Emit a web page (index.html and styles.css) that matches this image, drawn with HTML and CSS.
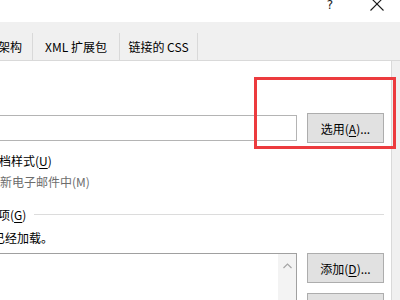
FILE: index.html
```html
<!DOCTYPE html>
<html lang="zh-CN">
<head>
<meta charset="utf-8">
<link rel="stylesheet" href="styles.css">
</head>
<body>
<div class="titlebar">
  <span class="help">?</span>
  <svg class="close" width="14" height="14" viewBox="0 0 14 14"><path d="M0.5 0.5L13.5 13.5M13.5 0.5L0.5 13.5" stroke="#1a1a1a" stroke-width="1.1" fill="none"/></svg>
</div>
<div class="tabbar">
  <div class="tab tab1">架构</div>
  <div class="tab tab2">XML 扩展包</div>
  <div class="tab tab3">链接的 CSS</div>
</div>
<div class="main">
  <div class="panel">
    <div class="groupline"></div>
    <div class="row-template">
      <div class="textbox"></div>
      <div class="btn">选用(<u>A</u>)...</div>
    </div>
    <div class="line check1">档样式(<u>U</u>)</div>
    <div class="line disabled">新电子邮件中(M)</div>
    <div class="grouphead">
      <span class="gtitle">项(<u>G</u>)</span>
      <span class="gline"></span>
    </div>
    <div class="line loaded">已经加载。</div>
    <div class="row-list">
      <div class="listbox">
        <div class="scroll">
          <svg width="9" height="6" viewBox="0 0 9 6"><path d="M0.5 5L4.5 1L8.5 5" stroke="#a6a6a6" stroke-width="1.2" fill="none"/></svg>
        </div>
      </div>
      <div class="btns">
        <div class="btn">添加(<u>D</u>)...</div>
        <div class="btn">删除(<u>R</u>)</div>
      </div>
    </div>
  </div>
  <div class="side"></div>
</div>
<div class="highlight"></div>
</body>
</html>
```
FILE: styles.css
```css
html, body {
  margin: 0;
  padding: 0;
}
body {
  width: 400px;
  height: 300px;
  overflow: hidden;
  background: #f0f0f0;
  font-family: "Noto Sans CJK SC", "Microsoft YaHei", sans-serif;
  font-size: 12px;
  color: #000;
  position: relative;
}
.titlebar {
  height: 22px;
  background: #fff;
  display: flex;
  justify-content: flex-end;
  align-items: flex-start;
  padding-right: 16px;
}
.help {
  font-family: "DejaVu Sans", sans-serif;
  font-size: 12px;
  line-height: 11px;
  margin-right: 37px;
  color: #1a1a1a;
}
.close {
  margin-top: -3px;
}
.tabbar {
  height: 27px;
  padding-top: 11px;
  border-bottom: 1px solid #d9d9d9;
  display: flex;
}
.tab {
  height: 27px;
  box-sizing: border-box;
  border-right: 1px solid #d9d9d9;
  display: flex;
  align-items: center;
  justify-content: center;
  white-space: nowrap;
  padding-bottom: 1px;
}
.tab1 {
  width: 33px;
  justify-content: flex-end;
  padding-right: 10px;
}
.tab2 { width: 87px; }
.tab3 { width: 78px; }
.main {
  display: flex;
  height: 239px;
}
.panel {
  width: 391px;
  background: #fff;
  border-right: 1px solid #d9d9d9;
  display: flex;
  flex-direction: column;
}
.groupline {
  height: 1px;
  background: #dcdcdc;
  margin-top: 34px;
  margin-right: 7px;
}
.row-template {
  margin-top: 18px;
  display: flex;
  align-items: center;
  height: 30px;
}
.textbox {
  width: 297px;
  height: 26px;
  box-sizing: border-box;
  border: 1px solid #b4b4b4;
  border-left: none;
  background: #fff;
}
.btn {
  width: 77px;
  height: 30px;
  box-sizing: border-box;
  background: #e1e1e1;
  border: 1px solid #adadad;
  display: flex;
  align-items: center;
  justify-content: center;
  white-space: nowrap;
  margin-left: 10px;
}
.btn u, .line u, .gtitle u {
  text-decoration-thickness: 1px;
  text-underline-offset: 2px;
}
.line {
  line-height: 21px;
  white-space: nowrap;
}
.check1 {
  margin-top: 7px;
  margin-left: -1px;
}
.disabled {
  color: #6d6d6d;
}
.grouphead {
  margin-top: 14px;
  display: flex;
  align-items: center;
  height: 21px;
  margin-right: 7px;
}
.gtitle {
  margin-left: -2px;
  white-space: nowrap;
}
.gline {
  flex: 1;
  height: 1px;
  background: #dcdcdc;
  margin-left: 8px;
}
.loaded {
  margin-top: 4px;
  margin-left: -7px;
}
.row-list {
  margin-top: 5px;
  display: flex;
  align-items: flex-start;
}
.listbox {
  width: 297px;
  height: 60px;
  box-sizing: border-box;
  border-top: 1px solid #a0a0a0;
  border-right: 1px solid #a0a0a0;
  display: flex;
  justify-content: flex-end;
}
.scroll {
  width: 18px;
  background: #f3f3f3;
  display: flex;
  justify-content: center;
  align-items: flex-start;
  padding-top: 9px;
}
.btns {
  display: flex;
  flex-direction: column;
  gap: 10px;
}
.side {
  flex: 1;
}
.highlight {
  position: absolute;
  left: 254px;
  top: 77px;
  width: 136px;
  height: 66px;
  border: 3px solid #ec3b3e;
}
```
